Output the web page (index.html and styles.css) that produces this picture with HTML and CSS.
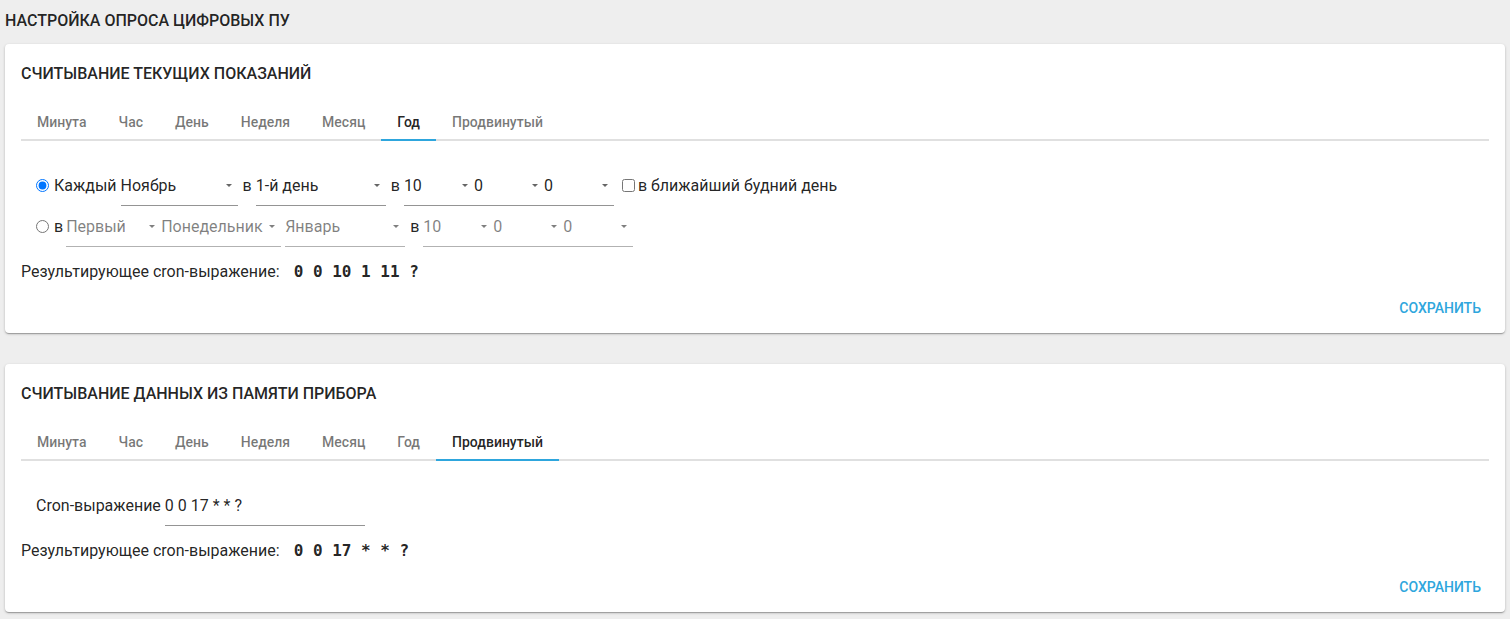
FILE: index.html
```html
<!DOCTYPE html>
<html lang="ru">
<head>
<meta charset="utf-8">
<title>Настройка опроса цифровых ПУ</title>
<link rel="stylesheet" href="styles.css">
</head>
<body>
<h1 class="page-title">НАСТРОЙКА ОПРОСА ЦИФРОВЫХ ПУ</h1>

<section class="card">
  <h2 class="card-title">СЧИТЫВАНИЕ ТЕКУЩИХ ПОКАЗАНИЙ</h2>
  <div class="tabs">
    <div class="tab">Минута</div>
    <div class="tab">Час</div>
    <div class="tab">День</div>
    <div class="tab">Неделя</div>
    <div class="tab">Месяц</div>
    <div class="tab active">Год</div>
    <div class="tab">Продвинутый</div>
  </div>
  <div class="panel">
    <div class="row">
      <input class="radio" type="radio" name="y1" checked>
      <span class="lbl">Каждый</span>
      <span class="select w117 ml4">Ноябрь<i class="arrow"></i></span>
      <span class="lbl sep">в</span>
      <span class="select w130">1-й день<i class="arrow"></i></span>
      <span class="lbl sep">в</span>
      <span class="select w70">10<i class="arrow"></i></span><span class="select w70">0<i class="arrow"></i></span><span class="select w70">0<i class="arrow"></i></span>
      <input class="check" type="checkbox">
      <span class="lbl">в ближайший будний день</span>
    </div>
    <div class="row">
      <input class="radio" type="radio" name="y1">
      <span class="lbl">в</span>
      <span class="select disabled w95 ml3">Первый<i class="arrow"></i></span><span class="select disabled w120">Понедельник<i class="arrow"></i></span>
      <span class="select disabled w120 ml4">Январь<i class="arrow"></i></span>
      <span class="lbl sep">в</span>
      <span class="select disabled w70">10<i class="arrow"></i></span><span class="select disabled w70">0<i class="arrow"></i></span><span class="select disabled w70">0<i class="arrow"></i></span>
    </div>
    <div class="result">Результирующее cron-выражение: <code class="cron">0 0 10 1 11 ?</code></div>
  </div>
  <div class="actions"><button class="btn">СОХРАНИТЬ</button></div>
</section>

<section class="card">
  <h2 class="card-title">СЧИТЫВАНИЕ ДАННЫХ ИЗ ПАМЯТИ ПРИБОРА</h2>
  <div class="tabs">
    <div class="tab">Минута</div>
    <div class="tab">Час</div>
    <div class="tab">День</div>
    <div class="tab">Неделя</div>
    <div class="tab">Месяц</div>
    <div class="tab">Год</div>
    <div class="tab active">Продвинутый</div>
  </div>
  <div class="panel">
    <div class="row">
      <span class="lbl">Cron-выражение</span>
      <span class="input w200 ml4">0 0 17 * * ?</span>
    </div>
    <div class="result">Результирующее cron-выражение: <code class="cron">0 0 17 * * ?</code></div>
  </div>
  <div class="actions"><button class="btn">СОХРАНИТЬ</button></div>
</section>
</body>
</html>
```
FILE: styles.css
```css
html, body {
  margin: 0;
}
body {
  padding: 5px;
  background: #eeeeee;
  font-family: Roboto, "Noto Sans", sans-serif;
  color: rgba(0, 0, 0, 0.87);
}
.page-title {
  margin: 0;
  padding: 4px 0 11px;
  font-size: 16px;
  line-height: 24px;
  font-weight: 500;
}
.card {
  background: #fff;
  border-radius: 4px;
  box-shadow: 0 1px 3px rgba(0,0,0,0.2), 0 1px 1px rgba(0,0,0,0.14), 0 2px 1px -1px rgba(0,0,0,0.12);
  margin-bottom: 31px;
}
.card-title {
  margin: 0;
  padding: 18px 16px 0;
  font-size: 16px;
  line-height: 24px;
  font-weight: 500;
}
.tabs {
  display: flex;
  margin: 7px 16px 0;
  border-bottom: 2px solid #e0e0e0;
}
.tab {
  height: 48px;
  box-sizing: border-box;
  padding: 19px 16px 0;
  font-size: 14px;
  line-height: 20px;
  font-weight: 500;
  color: rgba(0, 0, 0, 0.54);
  border-bottom: 2px solid transparent;
  margin-bottom: -2px;
}
.tab.active {
  color: rgba(0, 0, 0, 0.87);
  border-bottom-color: #2ea6dd;
}
.panel {
  padding: 35px 16px 0;
}
.row {
  display: flex;
  align-items: flex-start;
  padding-left: 15px;
  margin-bottom: 11px;
  font-size: 16px;
  line-height: 19px;
}
.radio, .check {
  margin: 3px 5px 0 0;
  width: 13px;
  height: 13px;
  flex: none;
}
.check {
  margin-left: 8px;
  margin-right: 3px;
}
.lbl {
  white-space: nowrap;
}
.sep {
  margin: 0 4px 0 5px;
}
.select, .input {
  position: relative;
  display: block;
  box-sizing: border-box;
  padding: 0 0 10px;
  border-bottom: 1px solid rgba(0, 0, 0, 0.42);
  white-space: nowrap;
  flex: none;
}
.select.disabled {
  color: rgba(0, 0, 0, 0.5);
  border-bottom-color: rgba(0, 0, 0, 0.3);
}
.arrow {
  position: absolute;
  right: 6px;
  top: 8px;
  width: 0;
  height: 0;
  border-left: 3px solid transparent;
  border-right: 3px solid transparent;
  border-top: 3px solid rgba(0, 0, 0, 0.6);
}
.disabled .arrow {
  border-top-color: rgba(0, 0, 0, 0.5);
}
.w70 { width: 70px; }
.w95 { width: 95px; }
.w117 { width: 117px; }
.w120 { width: 120px; }
.w130 { width: 130px; }
.w200 { width: 200px; }
.ml3 { margin-left: 3px; }
.ml4 { margin-left: 4px; }
.result {
  margin-top: 13px;
  font-size: 16px;
  line-height: 24px;
}
.cron {
  margin-left: 10px;
  font-family: "DejaVu Sans Mono", monospace;
  font-weight: bold;
  font-size: 16px;
}
.actions {
  display: flex;
  justify-content: flex-end;
  padding: 5px 8px 8px;
}
.btn {
  border: 0;
  background: none;
  padding: 9px 16px 7px;
  font-family: Roboto, sans-serif;
  font-size: 14px;
  line-height: 20px;
  font-weight: 500;
  letter-spacing: 0;
  color: #2ea6dd;
  cursor: pointer;
}
```
